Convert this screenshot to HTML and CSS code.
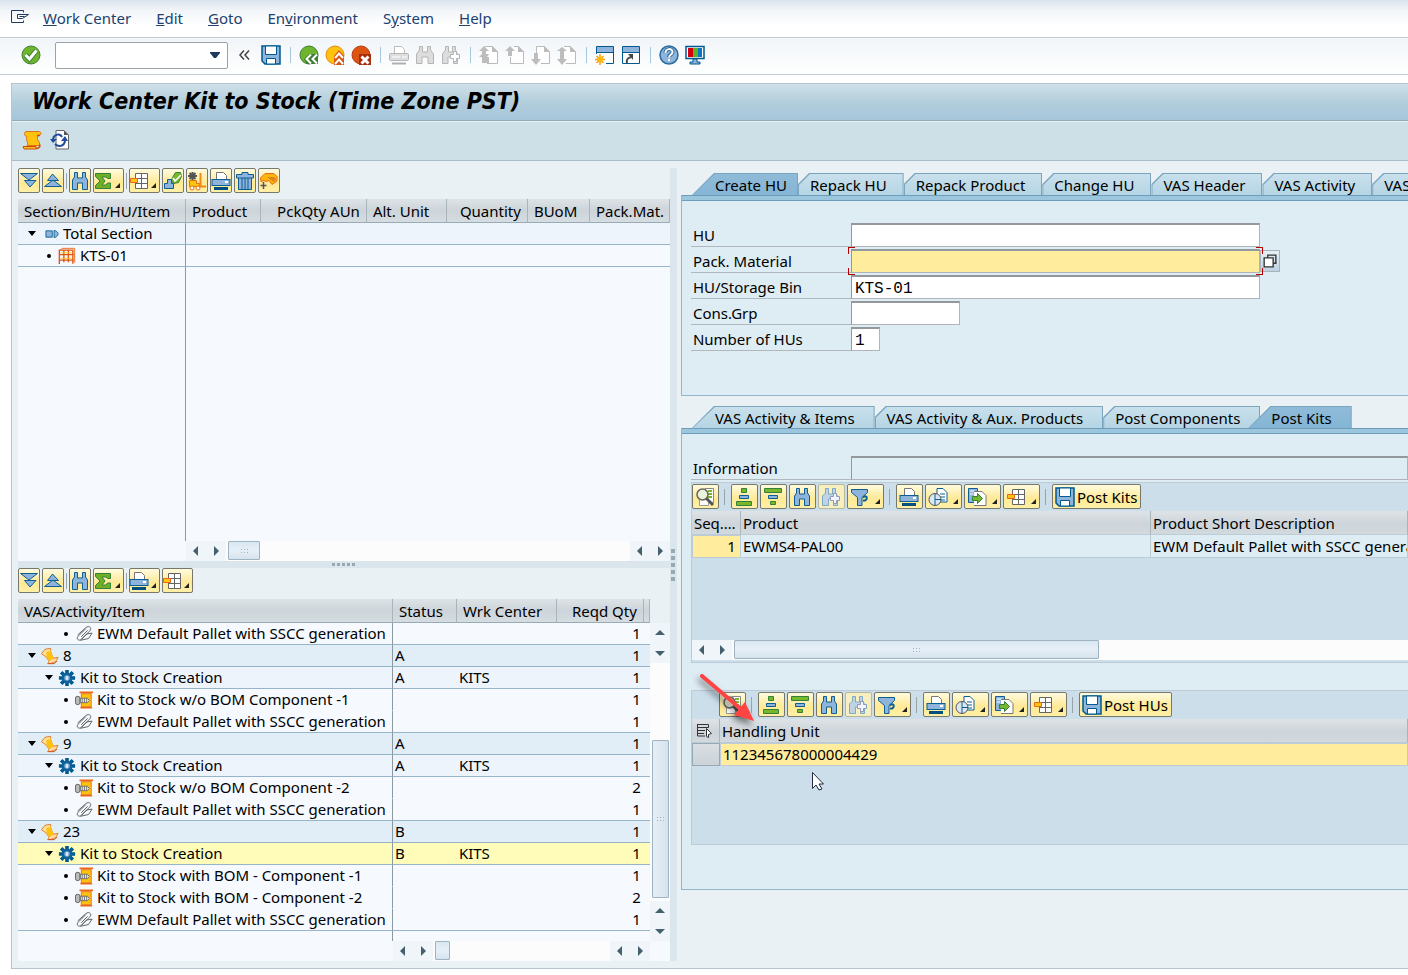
FILE: index.html
```html
<!DOCTYPE html>
<html lang="en">

<head>
  <meta charset="utf-8">
  <meta name="viewport" content="width=device-width, initial-scale=1.0">
  <title>Work Center Kit to Stock</title>
  <link rel="stylesheet" href="styles.css">
</head>

<body>
  <!-- Icon sprite -->
  <svg class="sprite" aria-hidden="true">
    <symbol id="i-exit" viewBox="0 0 20 20"><path d="M13.500 4.500V2.500H1.500V14.500H13.500V12.500M18.500 6.500H7.500V10.500H12.500L18.500 6.500M9.500 8.500H14.500" fill="none" stroke="#21385f"/></symbol>
    <symbol id="i-ok" viewBox="0 0 20 20"><circle cx="10" cy="10" r="9" fill="#6cb52d" stroke="#3f7d35"/><path d="M4.500 10l4 4 7-8.500" fill="none" stroke="#3f7d35" stroke-width="5"/><path d="M4.500 10l4 4 7-8.500" fill="none" stroke="#fff" stroke-width="3"/></symbol>
    <symbol id="i-save" viewBox="0 0 20 20"><path d="M1 1H19V19H4L1 16Z" fill="#8fb4dc" stroke="#005a8f" stroke-width="1.500"/><path d="M4.500 1H15.500V9.500H4.500Z" fill="#fff" stroke="#005a8f"/><path d="M5.500 13.500H14.500V19H5.500Z" fill="#fff" stroke="#005a8f"/></symbol>
    <symbol id="i-back" viewBox="0 0 20 20"><circle cx="10" cy="10" r="9" fill="#6cb52d" stroke="#3f7d35"/><path d="M19 9v10H8L5 14l5-5z" fill="#3f7d35"/><path d="M12 9.500L7.500 14l4.500 4.500M18 9.500L13.500 14l4.500 4.500" fill="none" stroke="#fff" stroke-width="2"/></symbol>
    <symbol id="i-up" viewBox="0 0 20 20"><circle cx="10" cy="10" r="9" fill="#ffc20e" stroke="#e58a14"/><path d="M9 20v-9l5-6 5 6v9z" fill="#d8560f"/><path d="M10 13l4-4.500 4 4.500M10 19l4-4.500 4 4.500" fill="none" stroke="#fff" stroke-width="2"/></symbol>
    <symbol id="i-cancel" viewBox="0 0 20 20"><circle cx="10" cy="10" r="9" fill="#dc5412" stroke="#b83c0e"/><path d="M8 9h12v11H8z" fill="#a82f0c"/><path d="M10.500 11.500l7 7M17.500 11.500l-7 7" stroke="#fff" stroke-width="3"/></symbol>
    <symbol id="i-gprint" viewBox="0 0 20 20"><path d="M5.500 9V1.500h7l3 3V9" fill="#fff" stroke="#bbb"/><rect x=".5" y="8.500" width="19" height="7" rx="1" fill="#ddd" stroke="#b5b5b5"/><path d="M3 12h8M13 12h5" stroke="#fff"/><path d="M3 18.500h14" stroke="#b0b0b0" stroke-width="2"/></symbol>
    <symbol id="i-gfind" viewBox="0 0 20 20"><path d="M1.500 18.500V9l3-4V1.500h3V7h5V1.500h3V5l3 4v9.500h-5.500V12H7v6.500z" fill="#ddd" stroke="#b5b5b5"/></symbol>
    <symbol id="i-gfindn" viewBox="0 0 20 20"><path d="M1.500 18.500V9l3-4V1.500h3V7h4V1.500h3V5l2 4v9.500h-4V12H7v6.500z" fill="#ddd" stroke="#b5b5b5"/><path d="M12.500 6.500h3v3h3v4h-3v3h-3v-3h-3v-4h3z" fill="#fff" stroke="#b5b5b5"/></symbol>
    <symbol id="i-gfirst" viewBox="0 0 20 20"><path d="M6 1.500h7.500l5 5v12H8" fill="#fff" stroke="#bbb"/><path d="M13 1l6 6h-6z M0 6l5-5 5 5H7v3h3l-2 3h2v6H3v-6H0l3-3V6z" fill="#bdbdbd"/></symbol>
    <symbol id="i-gprev" viewBox="0 0 20 20"><path d="M9 1.500h4.500l5 5v12h-13V12" fill="#fff" stroke="#bbb"/><path d="M13 1l6 6h-6z M0 6l5-5 5 5H7v5H3V6z" fill="#bdbdbd"/></symbol>
    <symbol id="i-gnext" viewBox="0 0 20 20"><path d="M5.500 8V1.500h8l5 5v12H10" fill="#fff" stroke="#bbb"/><path d="M13 1l6 6h-6z M0 14l5 6 5-6H7V8H3v6z" fill="#bdbdbd"/></symbol>
    <symbol id="i-glast" viewBox="0 0 20 20"><path d="M7 1.500h6.500l5 5v12H9" fill="#fff" stroke="#bbb"/><path d="M13 1l6 6h-6z M0 6l5-4 5 4H7v8h3l-5 6-5-6h3V6z" fill="#bdbdbd"/></symbol>
    <symbol id="i-newwin" viewBox="0 0 20 20"><path d="M1.500 9V1.500h17v17H11" fill="#fff" stroke="#005a8f"/><path d="M2 2h16v5H2z" fill="#8fb4dc"/><path d="M1.500 7.500h17" stroke="#005a8f"/><path d="M5 9v11M0 14.500h10M1.500 11l7 7M8.500 11l-7 7" stroke="#f6a018" stroke-width="1.500"/><circle cx="5" cy="14.500" r="3" fill="#ffb60a"/></symbol>
    <symbol id="i-shortcut" viewBox="0 0 20 20"><path d="M1.500 1.500h17v17h-17z" fill="#fff" stroke="#005a8f"/><path d="M2 2h16v5H2z" fill="#8fb4dc"/><path d="M1.500 7.500h17" stroke="#005a8f"/><path d="M6 18c-1-4 1-5 4-6" fill="none" stroke="#444" stroke-width="2"/><path d="M7 9h5v6z" fill="#444"/></symbol>
    <symbol id="i-help" viewBox="0 0 20 20"><circle cx="10" cy="10" r="9" fill="#8fb4dc" stroke="#2b6c9e" stroke-width="1.500"/><path d="M6.500 8c0-5 7-5 7-1 0 3-3.500 2.500-3.500 5" fill="none" stroke="#2b6c9e" stroke-width="4"/><path d="M6.500 8c0-5 7-5 7-1 0 3-3.500 2.500-3.500 5.500M10 14v2" fill="none" stroke="#fff" stroke-width="2"/></symbol>
    <symbol id="i-screen" viewBox="0 0 20 20"><rect x="1" y="1.500" width="18" height="12" fill="#fff" stroke="#005a8f" stroke-width="1.500"/><path d="M3 3h5v9H3z" fill="#d4000f"/><path d="M8 3h5v9H8z" fill="#5fb024"/><path d="M13 3h4v9h-4z" fill="#0a76c4"/><path d="M8 14h4v3h3v2H5v-2h3z" fill="#8fb4dc" stroke="#005a8f"/></symbol>
    <symbol id="i-scroll" viewBox="0 0 20 20"><path d="M4 1.500h13c2.500 0 2.500 4 0 4h-1.500v4l2 3v3H5c2-3-2-6 0-9-3 0-3-5-1-5z" fill="#ffc20e" stroke="#e0731a"/><path d="M1 16.500h13v2.500h-12z" fill="#ffc20e" stroke="#cf4a12"/><path d="M15 5.500h3M14 18.500c3 0 4-2 4-4" stroke="#cf4a12" stroke-width="1.500" fill="none"/></symbol>
    <symbol id="i-refresh" viewBox="0 0 20 20"><path d="M6 .5h8l4.500 4.500v14H6z" fill="#fff" stroke="#666"/><path d="M14 .5V5h4.500z" fill="#555"/><path d="M3 9c1-5 7-6 9-2M15 11c-1 6-7 6-10 3" fill="none" stroke="#1f4c9c" stroke-width="2"/><path d="M0 9h7l-4 4zM18 11h-7l4-5z" fill="#1f4c9c"/></symbol>
    <symbol id="i-expand" viewBox="0 0 20 20"><path d="M1.500 2.500h17L10 9z" fill="#8fb4dc" stroke="#0b5f94"/><path d="M5.500 9.500H17L11 16z" fill="#8fb4dc" stroke="#0b5f94"/></symbol>
    <symbol id="i-collapse" viewBox="0 0 20 20"><path d="M4.500 9.500h11L9.500 3z" fill="#8fb4dc" stroke="#0b5f94"/><path d="M1.500 15.500h17L10 9z" fill="#8fb4dc" stroke="#0b5f94"/></symbol>
    <symbol id="i-find" viewBox="0 0 20 20"><path d="M2.500 18.500V9l2-3V1.500h3V7h5V1.500h3V6l2 3v9.500h-5V12h-5v6.500z" fill="#8fb4dc" stroke="#0b5f94"/></symbol>
    <symbol id="i-findn" viewBox="0 0 20 20"><path d="M1.500 18.500V9l3-3V1.500h3V7h4V1.500h3V6l2 3v9.500h-4V12h-5v6.500z" fill="#c0d3e2" stroke="#7fa9c4"/><path d="M12.500 6.500h3v3h3v4h-3v3h-3v-3h-3v-4h3z" fill="#f4f4ff" stroke="#8d9bb8"/></symbol>
    <symbol id="i-sum" viewBox="0 0 20 20"><path d="M2.500 2.500h15v5h-3L13 6H9l3 4-3 4h4l1.500-2h3v5.500h-15v-3L7 10 2.500 5.500z" fill="#6fae25" stroke="#35803a"/></symbol>
    <symbol id="i-layout" viewBox="0 0 20 20"><path d="M6.500 2.500h12v15h-12zM6 7.500h12.500M6 12.500h12.500M12.500 2.500v15" fill="#fff" stroke="#666"/><path d="M1.500 7.500h7v4h-7z" fill="#ffc20e" stroke="#e8691b"/></symbol>
    <symbol id="i-stamp" viewBox="0 0 20 20"><path d="M9.500 6.500l3-5h5l1 4-3 6-5 1-2-3z" fill="#76b82a" stroke="#35803a"/><path d="M10 7l2 3 6-6" stroke="#fff" stroke-width="1.500" fill="none"/><path d="M4.500 8.500h4v4h2v5h-9v-5h3z" fill="#8fb4dc" stroke="#0b5f94"/></symbol>
    <symbol id="i-forklift" viewBox="0 0 20 20"><path d="M2.500 9.500h7v3h3v3h-10z" fill="#ffc20e" stroke="#e0731a"/><path d="M13.500 2v13.500H19" fill="none" stroke="#f08a1a" stroke-width="2"/><circle cx="5" cy="17" r="2" fill="#fff" stroke="#e0731a"/><circle cx="11" cy="17" r="2" fill="#fff" stroke="#e0731a"/><path d="M5.500 1v8M1 5h9M2.500 2l6 6M8.500 2l-6 6" stroke="#555" stroke-width="2"/></symbol>
    <symbol id="i-print" viewBox="0 0 20 20"><path d="M5.500 9V1.500h7l3 3V9" fill="#fff" stroke="#777"/><rect x="1" y="8.500" width="18" height="6" fill="#8fb4dc" stroke="#0b5f94"/><path d="M14 11h3" stroke="#fff" stroke-width="2"/><path d="M3 17.500h14" stroke="#00507f" stroke-width="3"/></symbol>
    <symbol id="i-trash" viewBox="0 0 20 20"><path d="M3.500 6h13v12.500h-13z" fill="#8fb4dc" stroke="#0b5f94"/><path d="M7 7v11M10 7v11M13 7v11" stroke="#0b5f94"/><path d="M1.500 3.500H7v-2h6v2h5.500V7h-17z" fill="#8fb4dc" stroke="#0b5f94"/></symbol>
    <symbol id="i-hand" viewBox="0 0 20 20"><path d="M1.500 7L6 2.500h9l3 3V10l-5 3.500-3-4-3 1-2-1-3 1z" fill="#ffb60a" stroke="#e8691b"/><path d="M8 6h7l2 2-2 3-3-2z" fill="#d9861a"/><path d="M4.500 11v7M1.500 14.500h6" stroke="#555" stroke-width="1.500"/></symbol>
    <symbol id="i-detail" viewBox="0 0 20 20"><path d="M10 1.500h8.500v14H10z" fill="#fff" stroke="#888"/><path d="M13 4h4M13 7h4M13 10h4" stroke="#76b82a" stroke-width="2"/><path d="M4.500 12.500h9v6h-9z" fill="#fff" stroke="#999"/><circle cx="7.500" cy="7.500" r="5.500" fill="#eaf2d8" stroke="#666" stroke-width="1.500"/><path d="M11.500 11.500l6.500 6.500" stroke="#555" stroke-width="3"/></symbol>
    <symbol id="i-sortup" viewBox="0 0 20 20"><path d="M7.500 1.500h5v4h-5zM2.500 14.500h15v4h-15z" fill="#76b82a" stroke="#35803a"/><path d="M5.500 8.500h9v3h-9z" fill="#8fb4dc" stroke="#0b5f94"/></symbol>
    <symbol id="i-sortdn" viewBox="0 0 20 20"><path d="M1.500 1.500h17v4h-17zM7.500 14.500h5v3h-5z" fill="#76b82a" stroke="#35803a"/><path d="M5.500 8.500h9v3h-9z" fill="#8fb4dc" stroke="#0b5f94"/></symbol>
    <symbol id="i-filter" viewBox="0 0 20 20"><path d="M1.500 2.500h16v3l-5.500 5v8H7.500v-8l-6-5z" fill="#8fb4dc" stroke="#0b5f94"/><path d="M13 10.500c5-4 5 4 0 3" fill="none" stroke="#0b5f94" stroke-width="2"/></symbol>
    <symbol id="i-view" viewBox="0 0 20 20"><path d="M9 1.500h6l4 4V15H9z" fill="#fff" stroke="#0b5f94"/><path d="M12 7h5M12 10h5M12 13h5" stroke="#0b5f94"/><circle cx="7" cy="12.500" r="6" fill="#dbe8f4" stroke="#555"/><path d="M7 7v11M7 12.500h6" stroke="#0b5f94" fill="none"/></symbol>
    <symbol id="i-export" viewBox="0 0 20 20"><path d="M1.500 1.500h9v14h-9z" fill="#8fb4dc" stroke="#0b5f94"/><path d="M3 4h5M3 7h3" stroke="#fff"/><path d="M7 4.500h8l4 4v10H7" fill="#fff" stroke="#777"/><path d="M5.500 9.500h5v-3l5 5-5 5v-3h-5z" fill="#76b82a" stroke="#35803a"/></symbol>
    <symbol id="i-rack" viewBox="0 0 20 20"><path d="M2.500 3.500l2-2h14v16" fill="none" stroke="#e8691b"/><path d="M1.500 3.500h15v15M1.500 3v16M6.500 3v14M11.500 3v14M1.500 8.500h16M1.500 14.500h16" fill="none" stroke="#dc5412" stroke-width="1.500"/><path d="M3 6.500h12M3 12.500h12" stroke="#ffc20e"/></symbol>
    <symbol id="i-section" viewBox="0 0 20 20"><path d="M5.500 6.500h7v7h-7zM14.500 6c4 1 4.500 3 4.500 4s-.5 3-4.500 4z" fill="#8fb4dc" stroke="#0b5f94"/></symbol>
    <symbol id="i-clip" viewBox="0 0 20 20"><path d="M12 4L4 12c-4 4 1 6 3 4l9-9c4-4-1-7-4-4l-9 8M7 13l7-7M6 17l9-2 4-6-6 1-6 6" fill="none" stroke="#555"/></symbol>
    <symbol id="i-order" viewBox="0 0 20 20"><path d="M.5 7.500l4-5 6-1c1 1 0 2 0 3l3 8 5.500-1-3 5-6 2c-2 0-2-2-1-3l-4-5z" fill="#ffe0a0" stroke="#e0731a"/><path d="M6 5.500l5-1 3 8-4 3-4-4z" fill="#ffc20e"/><path d="M7 18.500h8l3-3" fill="none" stroke="#cf4a12"/></symbol>
    <symbol id="i-gear" viewBox="0 0 20 20"><path d="M10 1v18M1 10h18M3.500 3.500l13 13M16.500 3.500l-13 13" stroke="#005a8f" stroke-width="4"/><circle cx="10" cy="10" r="6" fill="#0d639b"/><circle cx="10" cy="10" r="3" fill="#8fb4dc"/><path d="M9 8h2v4H9z" fill="#e8f1fa"/></symbol>
    <symbol id="i-part" viewBox="0 0 20 20"><path d="M5 1.500h15M6 18.500h13" stroke="#e8691b" stroke-width="2"/><path d="M7 3h11v14.500H7z" fill="#ffc20e" stroke="#e8691b"/><rect x=".5" y="6" width="5" height="9" rx="2" fill="#bbb" stroke="#555"/><path d="M6 8h8l2 2.500-2 2.500H6z" fill="#eee" stroke="#666"/><path d="M8 8v5M10.500 8v5M13 8v5" stroke="#666"/></symbol>
    <symbol id="i-choose" viewBox="0 0 20 20"><path d="M3.500 3.500h11v3h-11zM3.500 3v12H11M4 9.500h7M4 12.500h6" fill="none" stroke="#333"/><path d="M12.500 7.500l5 5-3 1v3l-2-1z" fill="#fff" stroke="#333"/></symbol>
    <symbol id="i-f4" viewBox="0 0 20 20"><path d="M7.500 6.500v-3h9v9h-3" fill="none" stroke="#333" stroke-width="1.500"/><path d="M3.500 6.500h10v10h-10z" fill="#fff" stroke="#333" stroke-width="1.500"/></symbol>
    <symbol id="a-left" viewBox="0 0 10 10"><path d="M7 0v10L2 5z" fill="#44606c"/></symbol>
    <symbol id="a-right" viewBox="0 0 10 10"><path d="M3 0v10l5-5z" fill="#44606c"/></symbol>
    <symbol id="a-up" viewBox="0 0 10 10"><path d="M0 7h10L5 2z" fill="#44606c"/></symbol>
    <symbol id="a-down" viewBox="0 0 10 10"><path d="M0 3h10L5 8z" fill="#44606c"/></symbol>
  </svg>

  <!-- Menu bar -->
  <nav class="menubar">
    <svg class="icon"><use href="#i-exit"/></svg>
    <button class="menu-item"><u>W</u>ork Center</button>
    <button class="menu-item"><u>E</u>dit</button>
    <button class="menu-item"><u>G</u>oto</button>
    <button class="menu-item">En<u>v</u>ironment</button>
    <button class="menu-item">S<u>y</u>stem</button>
    <button class="menu-item"><u>H</u>elp</button>
  </nav>

  <!-- Standard toolbar -->
  <div class="std-toolbar">
    <button class="flat" aria-label="Enter"><svg class="icon"><use href="#i-ok"/></svg></button>
    <div class="command">
      <select aria-label="Command field"><option></option></select>
      <svg class="command-arrow" viewBox="0 0 10 6"><path d="M0 0h10v1L6 6H4L0 1z" fill="#21385f"/></svg>
    </div>
    <button class="flat" aria-label="Hide command field"><svg class="icon" viewBox="0 0 20 20"><path d="M9 5.500L5 10l4 4.500M14 5.500L10 10l4 4.500" fill="none" stroke="#444" stroke-width="1.500"/></svg></button>
    <button class="flat" aria-label="Save"><svg class="icon"><use href="#i-save"/></svg></button>
    <span class="std-sep"></span>
    <button class="flat" aria-label="Back"><svg class="icon"><use href="#i-back"/></svg></button>
    <button class="flat" aria-label="Exit"><svg class="icon"><use href="#i-up"/></svg></button>
    <button class="flat" aria-label="Cancel"><svg class="icon"><use href="#i-cancel"/></svg></button>
    <span class="std-sep"></span>
    <button class="flat" aria-label="Print" disabled><svg class="icon"><use href="#i-gprint"/></svg></button>
    <button class="flat" aria-label="Find" disabled><svg class="icon"><use href="#i-gfind"/></svg></button>
    <button class="flat" aria-label="Find next" disabled><svg class="icon"><use href="#i-gfindn"/></svg></button>
    <span class="std-sep"></span>
    <button class="flat" aria-label="First page" disabled><svg class="icon"><use href="#i-gfirst"/></svg></button>
    <button class="flat" aria-label="Previous page" disabled><svg class="icon"><use href="#i-gprev"/></svg></button>
    <button class="flat" aria-label="Next page" disabled><svg class="icon"><use href="#i-gnext"/></svg></button>
    <button class="flat" aria-label="Last page" disabled><svg class="icon"><use href="#i-glast"/></svg></button>
    <span class="std-sep"></span>
    <button class="flat" aria-label="New session"><svg class="icon"><use href="#i-newwin"/></svg></button>
    <button class="flat" aria-label="Create shortcut"><svg class="icon"><use href="#i-shortcut"/></svg></button>
    <span class="std-sep"></span>
    <button class="flat" aria-label="Help"><svg class="icon"><use href="#i-help"/></svg></button>
    <button class="flat" aria-label="Customize layout"><svg class="icon"><use href="#i-screen"/></svg></button>
  </div>

  <main class="frame">
    <h1 class="title">Work Center Kit to Stock (Time Zone PST)</h1>
    <div class="app-toolbar">
      <button class="flat" aria-label="Log"><svg class="icon"><use href="#i-scroll"/></svg></button>
      <button class="flat" aria-label="Refresh"><svg class="icon"><use href="#i-refresh"/></svg></button>
    </div>

    <div class="workspace">
      <!-- Left side: section tree and VAS tree -->
      <div class="left">
        <div class="toolbar">
          <button class="btn" aria-label="Expand"><svg class="icon"><use href="#i-expand"/></svg></button>
          <button class="btn" aria-label="Collapse"><svg class="icon"><use href="#i-collapse"/></svg></button>
          <span class="sep"></span>
          <button class="btn" aria-label="Find"><svg class="icon"><use href="#i-find"/></svg></button>
          <button class="btn split" aria-label="Total"><svg class="icon"><use href="#i-sum"/></svg></button>
          <span class="sep"></span>
          <button class="btn split" aria-label="Layout"><svg class="icon"><use href="#i-layout"/></svg></button>
          <button class="btn" aria-label="Confirm"><svg class="icon"><use href="#i-stamp"/></svg></button>
          <button class="btn" aria-label="Create task"><svg class="icon"><use href="#i-forklift"/></svg></button>
          <button class="btn" aria-label="Print"><svg class="icon"><use href="#i-print"/></svg></button>
          <button class="btn" aria-label="Delete"><svg class="icon"><use href="#i-trash"/></svg></button>
          <button class="btn" aria-label="Process"><svg class="icon"><use href="#i-hand"/></svg></button>
        </div>

        <table class="tree sections">
          <colgroup><col><col class="c-product"><col class="c-pck"><col class="c-alt"><col class="c-qty"><col class="c-buom"><col class="c-mat"></colgroup>
          <thead>
            <tr><th>Section/Bin/HU/Item</th><th>Product</th><th class="num">PckQty AUn</th><th>Alt. Unit</th><th class="num">Quantity</th><th>BUoM</th><th>Pack.Mat.</th></tr>
          </thead>
          <tbody>
            <tr class="mid"><td><div class="node l0"><i class="open"></i><svg class="icon"><use href="#i-section"/></svg>Total Section</div></td><td colspan="6"></td></tr>
            <tr><td><div class="node l1"><i class="dot"></i><svg class="icon"><use href="#i-rack"/></svg>KTS-01</div></td><td colspan="6"></td></tr>
            <tr class="filler"><td></td><td colspan="6"></td></tr>
          </tbody>
        </table>
        <div class="scroll-row">
          <div class="hscroll sections-scroll">
            <button class="arrow" aria-label="Left"><svg><use href="#a-left"/></svg></button>
            <button class="arrow" aria-label="Right"><svg><use href="#a-right"/></svg></button>
            <div class="track"><div class="thumb short"><span class="grip"></span></div></div>
            <button class="arrow" aria-label="Left"><svg><use href="#a-left"/></svg></button>
            <button class="arrow" aria-label="Right"><svg><use href="#a-right"/></svg></button>
          </div>
        </div>

        <div class="hsplit"><span></span><span></span><span></span><span></span><span></span></div>

        <div class="toolbar">
          <button class="btn" aria-label="Expand"><svg class="icon"><use href="#i-expand"/></svg></button>
          <button class="btn" aria-label="Collapse"><svg class="icon"><use href="#i-collapse"/></svg></button>
          <span class="sep"></span>
          <button class="btn" aria-label="Find"><svg class="icon"><use href="#i-find"/></svg></button>
          <button class="btn split" aria-label="Total"><svg class="icon"><use href="#i-sum"/></svg></button>
          <span class="sep"></span>
          <button class="btn split" aria-label="Print"><svg class="icon"><use href="#i-print"/></svg></button>
          <button class="btn split" aria-label="Layout"><svg class="icon"><use href="#i-layout"/></svg></button>
        </div>

        <div class="vas">
          <table class="tree">
            <colgroup><col><col class="c-status"><col class="c-wrk"><col class="c-reqd"><col class="c-end"></colgroup>
            <thead>
              <tr><th>VAS/Activity/Item</th><th>Status</th><th>Wrk Center</th><th class="num">Reqd Qty</th><th></th></tr>
            </thead>
            <tbody>
              <tr><td><div class="node l2"><i class="dot"></i><svg class="icon"><use href="#i-clip"/></svg>EWM Default Pallet with SSCC generation</div></td><td></td><td></td><td class="num">1</td><td></td></tr>
              <tr class="top"><td><div class="node l0"><i class="open"></i><svg class="icon"><use href="#i-order"/></svg>8</div></td><td>A</td><td></td><td class="num">1</td><td></td></tr>
              <tr class="mid"><td><div class="node l1"><i class="open"></i><svg class="icon"><use href="#i-gear"/></svg>Kit to Stock Creation</div></td><td>A</td><td>KITS</td><td class="num">1</td><td></td></tr>
              <tr class="joined"><td><div class="node l2"><i class="dot"></i><svg class="icon"><use href="#i-part"/></svg>Kit to Stock w/o BOM Component -1</div></td><td></td><td></td><td class="num">1</td><td></td></tr>
              <tr><td><div class="node l2"><i class="dot"></i><svg class="icon"><use href="#i-clip"/></svg>EWM Default Pallet with SSCC generation</div></td><td></td><td></td><td class="num">1</td><td></td></tr>
              <tr class="top"><td><div class="node l0"><i class="open"></i><svg class="icon"><use href="#i-order"/></svg>9</div></td><td>A</td><td></td><td class="num">1</td><td></td></tr>
              <tr class="mid"><td><div class="node l1"><i class="open"></i><svg class="icon"><use href="#i-gear"/></svg>Kit to Stock Creation</div></td><td>A</td><td>KITS</td><td class="num">1</td><td></td></tr>
              <tr class="joined"><td><div class="node l2"><i class="dot"></i><svg class="icon"><use href="#i-part"/></svg>Kit to Stock w/o BOM Component -2</div></td><td></td><td></td><td class="num">2</td><td></td></tr>
              <tr><td><div class="node l2"><i class="dot"></i><svg class="icon"><use href="#i-clip"/></svg>EWM Default Pallet with SSCC generation</div></td><td></td><td></td><td class="num">1</td><td></td></tr>
              <tr class="top"><td><div class="node l0"><i class="open"></i><svg class="icon"><use href="#i-order"/></svg>23</div></td><td>B</td><td></td><td class="num">1</td><td></td></tr>
              <tr class="selected"><td><div class="node l1"><i class="open"></i><svg class="icon"><use href="#i-gear"/></svg>Kit to Stock Creation</div></td><td>B</td><td>KITS</td><td class="num">1</td><td></td></tr>
              <tr class="joined"><td><div class="node l2"><i class="dot"></i><svg class="icon"><use href="#i-part"/></svg>Kit to Stock with BOM - Component -1</div></td><td></td><td></td><td class="num">1</td><td></td></tr>
              <tr class="joined"><td><div class="node l2"><i class="dot"></i><svg class="icon"><use href="#i-part"/></svg>Kit to Stock with BOM - Component -2</div></td><td></td><td></td><td class="num">2</td><td></td></tr>
              <tr><td><div class="node l2"><i class="dot"></i><svg class="icon"><use href="#i-clip"/></svg>EWM Default Pallet with SSCC generation</div></td><td></td><td></td><td class="num">1</td><td></td></tr>
              <tr class="filler"><td></td><td></td><td></td><td></td><td></td></tr>
            </tbody>
          </table>
          <div class="vscroll">
            <button class="arrow" aria-label="Up"><svg><use href="#a-up"/></svg></button>
            <button class="arrow" aria-label="Down"><svg><use href="#a-down"/></svg></button>
            <div class="track"><div class="thumb"><span class="grip"></span></div></div>
            <button class="arrow" aria-label="Up"><svg><use href="#a-up"/></svg></button>
            <button class="arrow" aria-label="Down"><svg><use href="#a-down"/></svg></button>
          </div>
        </div>
        <div class="scroll-row vas-row">
          <div class="hscroll vas-scroll">
            <button class="arrow" aria-label="Left"><svg><use href="#a-left"/></svg></button>
            <button class="arrow" aria-label="Right"><svg><use href="#a-right"/></svg></button>
            <div class="track"><div class="thumb tiny"></div></div>
            <button class="arrow" aria-label="Left"><svg><use href="#a-left"/></svg></button>
            <button class="arrow" aria-label="Right"><svg><use href="#a-right"/></svg></button>
          </div>
        </div>
      </div>

      <div class="vsplit"><span></span><span></span><span></span><span></span><span></span></div>

      <!-- Right side: HU entry and posting -->
      <div class="right">
        <div class="tabs" role="tablist">
          <button class="tab active" role="tab">Create HU</button>
          <button class="tab" role="tab">Repack HU</button>
          <button class="tab" role="tab">Repack Product</button>
          <button class="tab" role="tab">Change HU</button>
          <button class="tab" role="tab">VAS Header</button>
          <button class="tab" role="tab">VAS Activity</button>
          <button class="tab" role="tab">VAS Activity</button>
        </div>
        <section class="panel create">
          <div class="field"><label for="hu">HU</label><input id="hu" class="long" type="text"></div>
          <div class="field">
            <label for="mat">Pack. Material</label>
            <div class="focus"><input id="mat" class="long" type="text"></div>
            <button class="f4" aria-label="Search help"><svg><use href="#i-f4"/></svg></button>
          </div>
          <div class="field"><label for="bin">HU/Storage Bin</label><input id="bin" class="long" type="text" value="KTS-01"></div>
          <div class="field"><label for="grp">Cons.Grp</label><input id="grp" class="medium" type="text"></div>
          <div class="field"><label for="count">Number of HUs</label><input id="count" class="small" type="text" value="1"></div>
        </section>

        <div class="tabs post-tabs" role="tablist">
          <button class="tab" role="tab">VAS Activity &amp; Items</button>
          <button class="tab" role="tab">VAS Activity &amp; Aux. Products</button>
          <button class="tab" role="tab">Post Components</button>
          <button class="tab active" role="tab">Post Kits</button>
        </div>
        <section class="panel post">
          <div class="field"><label for="info">Information</label><input id="info" class="info" type="text" readonly></div>

          <div class="grid kits">
            <div class="toolbar wide">
              <button class="btn" aria-label="Details"><svg class="icon"><use href="#i-detail"/></svg></button>
              <span class="sep"></span>
              <button class="btn" aria-label="Sort ascending"><svg class="icon"><use href="#i-sortup"/></svg></button>
              <button class="btn" aria-label="Sort descending"><svg class="icon"><use href="#i-sortdn"/></svg></button>
              <button class="btn" aria-label="Find"><svg class="icon"><use href="#i-find"/></svg></button>
              <button class="btn" aria-label="Find next" disabled><svg class="icon"><use href="#i-findn"/></svg></button>
              <button class="btn split" aria-label="Filter"><svg class="icon"><use href="#i-filter"/></svg></button>
              <span class="sep"></span>
              <button class="btn" aria-label="Print"><svg class="icon"><use href="#i-print"/></svg></button>
              <button class="btn split" aria-label="Views"><svg class="icon"><use href="#i-view"/></svg></button>
              <button class="btn split" aria-label="Export"><svg class="icon"><use href="#i-export"/></svg></button>
              <button class="btn split" aria-label="Layout"><svg class="icon"><use href="#i-layout"/></svg></button>
              <span class="sep"></span>
              <button class="btn text"><svg class="icon"><use href="#i-save"/></svg>Post Kits</button>
            </div>
            <table class="alv">
              <colgroup><col class="c-seq"><col class="c-prod"><col></colgroup>
              <thead><tr><th>Seq.…</th><th>Product</th><th>Product Short Description</th></tr></thead>
              <tbody><tr><td class="num key">1</td><td>EWMS4-PAL00</td><td>EWM Default Pallet with SSCC generation</td></tr></tbody>
            </table>
            <div class="hscroll">
              <button class="arrow" aria-label="Left"><svg><use href="#a-left"/></svg></button>
              <button class="arrow" aria-label="Right"><svg><use href="#a-right"/></svg></button>
              <div class="track"><div class="thumb long-thumb"><span class="grip"></span></div></div>
            </div>
          </div>

          <div class="grid units">
            <div class="toolbar wide inset">
              <button class="btn" aria-label="Details"><svg class="icon"><use href="#i-detail"/></svg></button>
              <span class="sep"></span>
              <button class="btn" aria-label="Sort ascending"><svg class="icon"><use href="#i-sortup"/></svg></button>
              <button class="btn" aria-label="Sort descending"><svg class="icon"><use href="#i-sortdn"/></svg></button>
              <button class="btn" aria-label="Find"><svg class="icon"><use href="#i-find"/></svg></button>
              <button class="btn" aria-label="Find next" disabled><svg class="icon"><use href="#i-findn"/></svg></button>
              <button class="btn split" aria-label="Filter"><svg class="icon"><use href="#i-filter"/></svg></button>
              <span class="sep"></span>
              <button class="btn" aria-label="Print"><svg class="icon"><use href="#i-print"/></svg></button>
              <button class="btn split" aria-label="Views"><svg class="icon"><use href="#i-view"/></svg></button>
              <button class="btn split" aria-label="Export"><svg class="icon"><use href="#i-export"/></svg></button>
              <button class="btn split" aria-label="Layout"><svg class="icon"><use href="#i-layout"/></svg></button>
              <span class="sep"></span>
              <button class="btn text"><svg class="icon"><use href="#i-save"/></svg>Post HUs</button>
            </div>
            <table class="alv">
              <colgroup><col class="c-sel"><col></colgroup>
              <thead><tr><th><svg class="choose"><use href="#i-choose"/></svg></th><th>Handling Unit</th></tr></thead>
              <tbody><tr><td class="rowsel"></td><td class="key">112345678000004429</td></tr></tbody>
            </table>
            <svg class="pointer-arrow" viewBox="0 0 64 56"><path d="M6 6L46 40" stroke="#ff4444" stroke-width="4" stroke-linecap="round"/><path d="M58 51L38 45l11-13z" fill="#ff4444"/></svg>
            <svg class="cursor" viewBox="0 0 14 20"><path d="M1.500 1.500v16l3.500-3.500 3 5 3-1-3-5h4.500z" fill="#fff" stroke="#222a44"/></svg>
          </div>
        </section>
      </div>
    </div>
  </main>
  <div class="taskmark"></div>
</body>

</html>
```
FILE: styles.css
```css
* {
  box-sizing: border-box;
}

body {
  margin: 0;
  min-height: 100vh;
  display: flex;
  flex-direction: column;
  overflow-x: hidden;
  background: #fff;
  color: #000;
  font-family: "Noto Sans", "DejaVu Sans", sans-serif;
  font-size: 15px;
  line-height: 20px;
}

button,
input,
select {
  font: inherit;
  color: inherit;
}

button {
  padding: 0;
  border: 0;
  background: none;
}

.sprite {
  position: absolute;
  width: 0;
  height: 0;
}

.icon {
  width: 20px;
  height: 20px;
  flex: none;
}

/* Menu bar */
.menubar {
  display: flex;
  align-items: center;
  gap: 25px;
  height: 38px;
  padding: 0 10px 1px;
  border-bottom: 1px solid #c3cdd5;
  background: linear-gradient(#d9e3ed, #f3f6f9 30%, #fff 70%);
}

.menubar .icon {
  margin-right: -12px;
}

.menu-item {
  color: #21416f;
}

/* Standard toolbar */
.std-toolbar {
  display: flex;
  align-items: center;
  gap: 6px;
  height: 37px;
  padding: 0 21px 2px;
  border-bottom: 1px solid #c3cdd5;
  background: linear-gradient(#f1f5f9, #fff);
}

.flat {
  display: flex;
  justify-content: center;
  width: 20px;
}

.command {
  position: relative;
  width: 173px;
  margin: 0 1px 0 8px;
}

.command select {
  display: block;
  width: 100%;
  height: 27px;
  border: 1px solid #9ba3a8;
  border-radius: 2px;
  background: #fff;
  appearance: none;
}

.command-arrow {
  position: absolute;
  top: 10px;
  right: 8px;
  width: 10px;
  height: 6px;
  pointer-events: none;
}

.std-sep {
  width: 1px;
  height: 16px;
  margin: 0 2px 0 3px;
  background: #a5c8dc;
}

/* Application frame */
.frame {
  flex: 1;
  margin: 8px 0 6px 11px;
  border: 1px solid #b5c5d0;
  border-right: 0;
  background: #e9f1f4;
}

.title {
  margin: 0;
  height: 37px;
  padding: 0 20px;
  border-bottom: 1px solid #8faabb;
  background: linear-gradient(#d0e1ea, #b3cedb 50%, #a5c6da);
  font: italic bold 23px/34px "DejaVu Sans Condensed", "DejaVu Sans", sans-serif;
}

.app-toolbar {
  display: flex;
  align-items: center;
  gap: 8px;
  height: 40px;
  padding: 0 10px 3px;
  border-top: 1px solid #eaf2f5;
  border-bottom: 1px solid #a5bccb;
  background: #cde0e7;
}

.workspace {
  display: grid;
  grid-template-columns: 46.9% 7px 1fr;
  padding: 7px 0 7px 6px;
}

.left,
.right {
  min-width: 0;
}

.right {
  overflow: hidden;
  padding: 5px 0 0 4px;
}

.vsplit,
.hsplit {
  display: flex;
  align-items: center;
  justify-content: center;
  gap: 3px;
  background: #dbe6ec;
}

.vsplit {
  flex-direction: column;
}

.vsplit span {
  width: 4px;
  height: 4px;
  background: #98a9b6;
}

.hsplit {
  height: 7px;
  gap: 2px;
}

.hsplit span {
  width: 3px;
  height: 3px;
  background: #98a9b6;
}

/* Yellow button bars */
.toolbar {
  display: flex;
  gap: 2px;
  height: 31px;
}

.btn {
  display: flex;
  align-items: center;
  justify-content: center;
  width: 22px;
  height: 25px;
  border: 1px solid #77776a;
  border-radius: 2px;
  background: linear-gradient(#fffbe0, #ffe994 60%, #fff0a8);
}

.btn:disabled {
  border-color: #b7b79c;
  background: #f7efc0;
}

.btn .icon {
  margin: 0 -1px;
}

.split {
  position: relative;
  justify-content: flex-start;
  width: 31px;
}

.split::after {
  content: "";
  position: absolute;
  right: 3px;
  bottom: 4px;
  border-left: 5px solid transparent;
  border-bottom: 5px solid #222;
}

.sep {
  width: 1px;
  height: 16px;
  margin: 5px 0;
  background: #9aa3a8;
}

.wide {
  height: 28px;
  padding: 1px 0 0;
}

.wide .btn {
  width: 27px;
}

.wide .split {
  width: 37px;
  padding-left: 3px;
}

.wide .sep {
  margin: 5px 4px 5px 3px;
}

.wide .text {
  width: auto;
  padding: 0 3px;
  gap: 3px;
}

.inset {
  padding-left: 27px;
}

/* Trees */
.tree {
  width: 100%;
  table-layout: fixed;
  border-collapse: separate;
  border-spacing: 0;
  background: #f6f9fe;
}

.c-product { width: 75px; }
.c-pck { width: 106px; }
.c-alt { width: 80px; }
.c-qty { width: 81px; }
.c-buom { width: 62px; }
.c-mat { width: 80px; }
.c-status { width: 64px; }
.c-wrk { width: 100px; }
.c-reqd { width: 87px; }
.c-end { width: 6px; }
.c-seq { width: 49px; }
.c-prod { width: 410px; }
.c-sel { width: 28px; }

.tree th {
  height: 24px;
  padding: 0 6px;
  border-right: 1px solid #a9b5bd;
  border-bottom: 1px solid #98aab5;
  background: linear-gradient(#dde3e6, #cdd4da 50%, #d6dde1);
  font-weight: normal;
  text-align: left;
  white-space: nowrap;
}

.tree td {
  height: 22px;
  padding: 0 2px;
  border-bottom: 1px solid #98b4c8;
  white-space: nowrap;
  line-height: 21px;
}

.tree td:first-child {
  padding: 0;
  border-right: 1px solid #8a9aa5;
}

.tree th.num,
.tree td.num,
.alv .num {
  text-align: right;
}

.tree td.num {
  padding-right: 3px;
}

.tree th:last-child {
  padding-right: 0;
}

.tree .top td { background: #e2eef7; }
.tree .mid td { background: #edf4fb; }
.tree .selected td { background: #fffbb8; }
.tree .joined td { border-bottom-color: transparent; }

.tree .filler td {
  height: 10px;
  border-bottom: 0;
}

.sections .filler td {
  height: 274px;
}

.node {
  display: flex;
  align-items: center;
  overflow: hidden;
}

.node .icon {
  width: 18px;
  height: 18px;
  margin-right: 4px;
}

.l0 { padding-left: 5px; }
.l1 { padding-left: 22px; }
.l2 { padding-left: 39px; }

.node i {
  display: flex;
  justify-content: center;
  width: 18px;
}

.open::before {
  content: "";
  border: 4px solid transparent;
  border-top: 5px solid #000;
  border-bottom: 0;
}

.dot::before {
  content: "";
  width: 4px;
  height: 4px;
  border-radius: 2px;
  background: #000;
}

.vas {
  display: grid;
  grid-template-columns: 1fr 20px;
}

/* Scrollbars */
.scroll-row {
  display: flex;
  justify-content: flex-end;
  height: 20px;
  background: #f6f9fe;
}

.vas-row {
  padding-right: 20px;
}

.hscroll,
.vscroll {
  display: flex;
  height: 20px;
  background: #fcfcfd;
}

.sections-scroll { width: 484px; }
.vas-scroll { width: 257px; }

.vscroll {
  flex-direction: column;
  height: auto;
  margin-top: 24px;
}

.arrow {
  display: flex;
  align-items: center;
  justify-content: center;
  flex: none;
  width: 20px;
  height: 20px;
  background: #f0f5f9;
}

.arrow svg {
  width: 10px;
  height: 10px;
}

.track {
  display: flex;
  flex: 1;
}

.hscroll .track {
  padding-left: 2px;
}

.vscroll .track {
  flex-direction: column;
  justify-content: flex-end;
  padding: 0 1px 3px 2px;
}

.thumb {
  display: flex;
  align-items: center;
  justify-content: center;
  height: 19px;
  border: 1px solid #9db3c1;
  border-radius: 1px;
  background: linear-gradient(#d9e7f1, #e6eff7 50%, #d5e3ee);
}

.vscroll .thumb {
  height: 158px;
  background: linear-gradient(90deg, #e6eff7, #d5e3ee);
}

.short { width: 32px; }
.tiny { width: 15px; }
.long-thumb { width: 365px; }

.grip {
  width: 8px;
  height: 6px;
  background: radial-gradient(circle, #9db3c1 1px, transparent 1px) 0 0 / 3px 3px;
}

/* Tabs */
.tabs {
  display: flex;
  height: 22px;
  padding-left: 11px;
}

.tab {
  position: relative;
  z-index: 0;
  flex: none;
  height: 22px;
  padding: 1px 17px 0 12px;
  background: #7ba5bf;
  clip-path: polygon(11px 0, 100% 0, 100% 100%, 0 100%, 0 11px);
  white-space: nowrap;
}

.tab::before {
  content: "";
  position: absolute;
  z-index: -1;
  inset: 1px 1px 0 1px;
  background: linear-gradient(#c9e0ec, #b5d5e4);
  clip-path: polygon(11px 0, 100% 0, 100% 100%, 0 100%, 0 11px);
}

.tab.active::before {
  background: linear-gradient(#8fbbd8, #85b5d5);
}

.tab.active,
.tab:first-child {
  padding-left: 23px;
  padding-right: 11px;
}

.tab.active,
.tab.active::before,
.tab:first-child,
.tab:first-child::before {
  clip-path: polygon(22px 0, 100% 0, 100% 100%, 0 100%);
}

.post-tabs .tab {
  padding-right: 20px;
}

.tab + .active {
  margin-left: -12px;
}

.panel {
  border: 1px solid #94b6cb;
  border-top: 0;
  border-right: 0;
  background: #deecf4;
  padding: 0 0 0 9px;
}

.panel::before {
  content: "";
  display: block;
  height: 4px;
  margin-left: -9px;
  border: 1px solid #6d9dbb;
  border-width: 1px 0;
  background: #9cc5de;
}

.create {
  margin-bottom: 10px;
  padding-bottom: 42px;
}

.post {
  padding-bottom: 44px;
}

/* Form fields */
.field {
  display: flex;
  height: 24px;
  margin-bottom: 2px;
}

.panel .field:first-child {
  margin-top: 22px;
}

.field label {
  flex: none;
  width: 160px;
  padding: 2px;
  border-bottom: 1px solid #b0b8bc;
}

.field input {
  height: 24px;
  padding: 2px 3px 0;
  border: 1px solid #b0b4b8;
  border-top: 2px solid #92989c;
  border-left-color: #92989c;
  background: #fff;
  font-family: "Liberation Mono", monospace;
  font-size: 16px;
}

.long { width: 409px; }
.medium { width: 109px; }
.small { width: 29px; }

.field .info {
  flex: 1;
  background: #deecf4;
}

.field .focus {
  position: relative;
}

.field .focus input {
  background: #ffec9c;
}

.focus::after {
  content: "";
  position: absolute;
  inset: -2px -3px;
  pointer-events: none;
  background:
    linear-gradient(#b50000 0 0) 0 0 / 7px 1px,
    linear-gradient(#b50000 0 0) 0 0 / 1px 7px,
    linear-gradient(#b50000 0 0) 100% 0 / 7px 1px,
    linear-gradient(#b50000 0 0) 100% 0 / 1px 7px,
    linear-gradient(#b50000 0 0) 0 100% / 7px 1px,
    linear-gradient(#b50000 0 0) 0 100% / 1px 7px,
    linear-gradient(#b50000 0 0) 100% 100% / 7px 1px,
    linear-gradient(#b50000 0 0) 100% 100% / 1px 7px;
  background-repeat: no-repeat;
}

.f4 {
  width: 20px;
  height: 22px;
  margin-top: 1px;
  border: 1px solid #a8b2ba;
  background: linear-gradient(#e6eff6, #bfd2e2);
}

.f4 svg {
  display: block;
  width: 18px;
  height: 18px;
}

/* Grids */
.grid {
  display: flex;
  flex-direction: column;
  position: relative;
  border: 1px solid #bccbd6;
  border-right: 0;
  background: #cbdee9;
}

.kits {
  height: 181px;
}

.kits .hscroll {
  margin: auto 0 2px;
}

.units {
  height: 155px;
  margin-top: 27px;
}

.alv {
  width: 100%;
  table-layout: fixed;
  border-collapse: separate;
  border-spacing: 0;
}

.alv th {
  height: 24px;
  padding: 0 2px;
  border-right: 1px solid #a9b5bd;
  border-bottom: 1px solid #bccbd6;
  background: linear-gradient(#dde3e6, #cdd4da 60%, #d3dade);
  font-weight: normal;
  text-align: left;
  white-space: nowrap;
}

.alv td {
  height: 23px;
  padding: 0 2px;
  border-right: 1px solid #bccbd6;
  border-bottom: 1px solid #bccbd6;
  background: #deecf4;
  line-height: 19px;
  white-space: nowrap;
  overflow: hidden;
}

.alv td.key {
  border: 1px solid #bccbd6;
  background: #ffec9c;
}

.alv td.num {
  padding-right: 4px;
}

.alv td.rowsel {
  border: 1px solid #98a9b6;
  background: linear-gradient(#d9dfe3, #cbd3d9);
}

.choose {
  display: block;
  width: 20px;
  height: 20px;
}

/* Drawn over the unit grid */
.pointer-arrow {
  position: absolute;
  left: 4px;
  top: -21px;
  width: 64px;
  height: 56px;
  filter: drop-shadow(-2px 4px 3px rgba(0, 0, 0, 0.5));
}

.cursor {
  position: absolute;
  left: 119px;
  top: 80px;
  width: 14px;
  height: 20px;
}

.taskmark {
  width: 46px;
  height: 2px;
  margin-left: 57.6%;
  background: #2aa9e8;
}
```
